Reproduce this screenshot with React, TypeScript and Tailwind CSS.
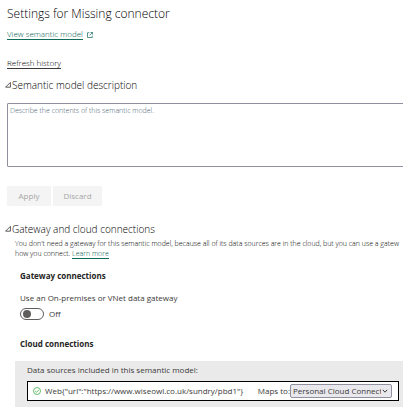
import React, { useState } from 'react';

interface SectionHeadingProps {
  title: string;
}

function SectionHeading({ title }: SectionHeadingProps) {
  return (
    <h2 className="flex h-4 items-center gap-px pl-[5px] text-[10px] leading-4 font-[350] text-black">
      <svg className="h-[7px] w-[6px] shrink-0" viewBox="0 0 6 7" fill="none" stroke="#333" strokeWidth="0.8">
        <path d="M0.6 5.2 L5.4 0.4 V5.2 Z" />
      </svg>
      {title}
    </h2>
  );
}

export default function App() {
  const [description, setDescription] = useState('');
  const [useGateway, setUseGateway] = useState(false);

  return (
    <main className="overflow-hidden bg-white pt-1 font-['Open_Sans','Noto_Sans',sans-serif] text-[8px] leading-3 whitespace-nowrap text-[#3b3a39]">
      <h1 className="pl-[7px] text-[12px] leading-5 font-light text-black">Settings for Missing connector</h1>

      <div className="mt-[5px] flex items-center gap-1 pl-[7px] font-light">
        <a href="#model" className="border-b border-[#0f6b5c] leading-[10px] text-[#00594b]">
          View semantic model
        </a>
        <svg className="h-[6px] w-[6px]" viewBox="0 0 6 6" fill="none" stroke="#0f6b5c" strokeWidth="0.7">
          <path d="M2.4 0.7 H0.5 V5.5 H5.3 V3.6 M3.5 0.5 H5.5 V2.5 M5.4 0.6 L2.6 3.4" />
        </svg>
      </div>

      <div className="mt-[18px] flex pl-[7px] font-light text-black">
        <a href="#history" className="border-b border-[#3b3a39] leading-[10px]">
          Refresh history
        </a>
      </div>

      <section className="mt-2">
        <SectionHeading title="Semantic model description" />
        <div className="-mr-1 mt-[10px] pl-[7px]">
          <textarea
            aria-label="Semantic model description"
            placeholder="Describe the contents of this semantic model."
            value={description}
            onChange={e => setDescription(e.target.value)}
            className="block h-16 w-full resize-none rounded-[1px] border border-[#8f8f9d] bg-white px-[2px] pt-px text-[7px] leading-3 font-[350] placeholder:text-[#4c5f75]"
          />
        </div>
        <div className="mt-[19px] flex gap-[2px] pl-[7px]">
          <button type="button" disabled className="h-5 w-11 bg-[#f4f4f4] text-[#a6a6a6]">
            Apply
          </button>
          <button type="button" disabled className="h-5 w-[49px] bg-[#f4f4f4] text-[#a6a6a6]">
            Discard
          </button>
        </div>
      </section>

      <section className="mt-[15px]">
        <SectionHeading title="Gateway and cloud connections" />
        <p className="mt-[2px] pl-[15px] text-[7px] leading-[10px] font-[350] text-black">
          You don't need a gateway for this semantic model, because all of its data sources are in the cloud, but you can use a gatew
          <br />
          how you connect.{' '}
          <a href="#learn" className="border-b border-[#0f6b5c] text-[#00594b]">
            Learn more
          </a>
        </p>

        <div className="mt-[11px] pl-5">
          <h3 className="font-bold text-[#252423]">Gateway connections</h3>
          <p id="gateway-label" className="mt-[10px]">
            Use an On-premises or VNet data gateway
          </p>
          <label className="mt-1 flex w-fit items-center gap-[5px]">
            <input
              type="checkbox"
              role="switch"
              aria-labelledby="gateway-label"
              checked={useGateway}
              onChange={e => setUseGateway(e.target.checked)}
              className="h-3 w-6 appearance-none rounded-full border border-[#605e5c] bg-white p-px pl-[2px] before:block before:size-2 before:rounded-full before:bg-[#605e5c] checked:before:ml-auto"
            />
            {useGateway ? 'On' : 'Off'}
          </label>
          <h3 className="mt-[18px] font-bold text-[#252423]">Cloud connections</h3>
        </div>

        <div className="mt-[11px] ml-[15px] bg-[#eaeaea] pt-[3px] pr-[4px] pb-[6px] pl-3">
          <p>Data sources included in this semantic model:</p>
          <div className="mt-[5px] flex h-[20px] items-center border border-black bg-white pr-[6px] pl-[5px]">
            <svg className="h-2 w-2 shrink-0" viewBox="0 0 8 8" fill="none" stroke="#3fae49" strokeWidth="0.8">
              <circle cx="4" cy="4" r="3.5" />
              <path d="M2.2 4.1 L3.5 5.3 L5.8 2.9" />
            </svg>
            <span className="ml-1">{'Web{"url":"https://www.wiseowl.co.uk/sundry/pbd1"}'}</span>
            <label htmlFor="maps-to" className="ml-auto">
              Maps to:
            </label>
            <div className="relative w-[102px]">
              <select
                id="maps-to"
                className="block h-[14px] w-full appearance-none overflow-hidden rounded-[2px] border border-[#8f8f9d] bg-[#e9e9ed] pr-[10px] pl-[2px] text-[8px] leading-3"
              >
                <option>Personal Cloud Connection</option>
              </select>
              <svg
                className="pointer-events-none absolute top-1 right-1 h-[6px] w-[6px]"
                viewBox="0 0 6 6"
                fill="none"
                stroke="#3b3a39"
                strokeWidth="1"
              >
                <path d="M0.8 1.8 L3 4.2 L5.2 1.8" />
              </svg>
            </div>
          </div>
        </div>
      </section>
    </main>
  );
}
